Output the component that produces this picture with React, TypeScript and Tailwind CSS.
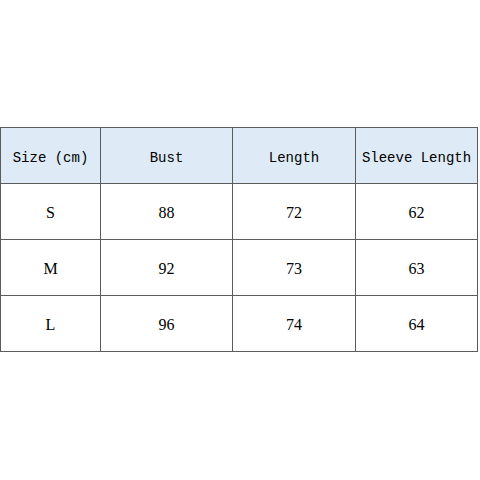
const headers = ["Size (cm)", "Bust", "Length", "Sleeve Length"];

const rows = [
  ["S", "88", "72", "62"],
  ["M", "92", "73", "63"],
  ["L", "96", "74", "64"],
];

const widths = ["w-[100px]", "w-[132px]", "w-[123px]", "w-[122px]"];

export default function App() {
  return (
    <div className="w-[480px] h-[480px] bg-white pt-[127px] font-['Liberation_Mono','DejaVu_Sans_Mono',monospace] text-[14px] text-black">
      <table className="border-collapse table-fixed w-[478px]">
        <thead>
          <tr className="h-[56px] bg-[#deeaf6]">
            {headers.map((h, i) => (
              <th
                key={h}
                className={`${widths[i]} border border-[#5c5c5c] pt-[5px] font-normal text-center whitespace-nowrap`}
              >
                {h}
              </th>
            ))}
          </tr>
        </thead>
        <tbody className="font-['Liberation_Serif','DejaVu_Serif',serif] text-[16px]">
          {rows.map((r) => (
            <tr key={r[0]} className="h-[56px]">
              {r.map((c, i) => (
                <td key={i} className="border border-[#5c5c5c] pt-[3px] text-center">
                  {c}
                </td>
              ))}
            </tr>
          ))}
        </tbody>
      </table>
    </div>
  );
}
